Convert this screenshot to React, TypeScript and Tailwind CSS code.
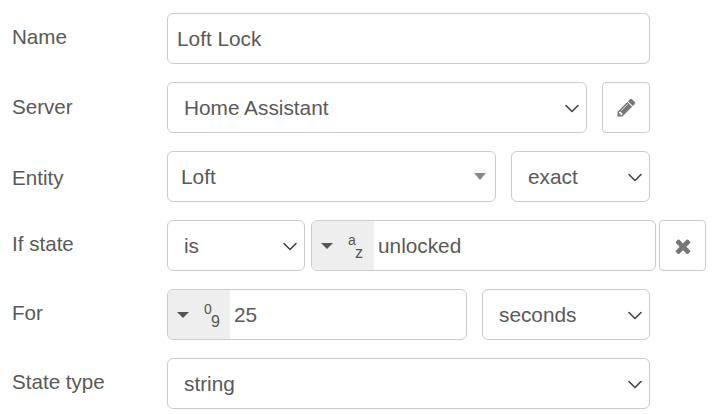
import React from "react";

const box = "h-[51px] flex items-center bg-white border border-[#ccc] rounded-[6px] text-[20.8px] text-[#595959]";

const Chevron = () => (
  <svg width="16" height="16" viewBox="0 0 16 16" className="shrink-0 mr-[1px]" fill="none">
    <path d="M2 5.5l6 6 6-6" stroke="#444" strokeWidth="1.6" strokeLinecap="round" strokeLinejoin="round" />
  </svg>
);

const Pencil = () => (
  <svg width="21" height="21" viewBox="0 0 1792 1792" fill="#777">
    <path d="M491 1536l91-91-235-235-91 91v107h128v128h107zm523-928q0-22-22-22-10 0-17 7l-542 542q-7 7-7 17 0 22 22 22 10 0 17-7l542-542q7-7 7-17zm-54-192l416 416-832 832h-416v-416zm683 96q0 53-37 90l-166 166-416-416 166-165q36-38 90-38 53 0 91 38l235 234q37 39 37 91z" />
  </svg>
);

const Times = () => (
  <svg width="22" height="22" viewBox="0 0 1792 1792" fill="#777">
    <path d="M1490 1322q0 40-28 68l-136 136q-28 28-68 28t-68-28l-294-294-294 294q-28 28-68 28t-68-28l-136-136q-28-28-28-68t28-68l294-294-294-294q-28-28-28-68t28-68l136-136q28-28 68-28t68 28l294 294 294-294q28-28 68-28t68 28l136 136q28 28 28 68t-28 68l-294 294 294 294q28 28 28 68z" />
  </svg>
);

const Caret = () => <span className="w-0 h-0 ml-[1px] border-x-[6px] border-x-transparent border-t-[6px] border-t-[#555]" />;

const Select = ({ value, className }: { value: string; className: string }) => (
  <div className={`${box} ${className} pl-[16px] pr-[5px] justify-between`}>
    <span>{value}</span>
    <Chevron />
  </div>
);

const TypeTag = ({ top, bottom }: { top: string; bottom: string }) => (
  <div className="w-[62px] h-full bg-[#eee] rounded-l-[5px] flex items-center pl-[8px] shrink-0">
    <Caret />
    <span className="relative ml-[15px] w-[18px] h-full text-[#555]">
      <span className="absolute left-0 top-[11px] text-[14px] leading-[16px]">{top}</span>
      <span className="absolute left-[7px] top-[23px] text-[16px] leading-[18px]">{bottom}</span>
    </span>
  </div>
);

const Row = ({ label, labelClass, children }: { label: string; labelClass: string; children: React.ReactNode }) => (
  <div className="flex items-center h-[51px]">
    <label className={`w-[155px] shrink-0 text-[20.6px] text-[#595959] ${labelClass}`}>{label}</label>
    {children}
  </div>
);

export default function App() {
  return (
    <div className="w-[720px] h-[414px] bg-white pl-[12px] pt-[13px] flex flex-col gap-[18px] overflow-hidden font-['Liberation_Sans',Arial,sans-serif]">
      <Row label="Name" labelClass="-mt-[3px]">
        <div className={`${box} w-[483px] pl-[9px]`}>Loft Lock</div>
      </Row>
      <Row label="Server" labelClass="-mt-[1px]">
        <Select value="Home Assistant" className="w-[420px]" />
        <div className={`${box} !rounded-[4px] w-[48px] ml-[15px] justify-center`}>
          <Pencil />
        </div>
      </Row>
      <Row label="Entity" labelClass="mt-[3px]">
        <div className={`${box} w-[329px] pl-[13px] pr-[9px] justify-between`}>
          <span>Loft</span>
          <span className="w-0 h-0 border-x-[6px] border-x-transparent border-t-[7px] border-t-[#888]" />
        </div>
        <Select value="exact" className="w-[139px] ml-[15px]" />
      </Row>
      <Row label="If state" labelClass="-mt-[3px]">
        <Select value="is" className="w-[138px]" />
        <div className={`${box} w-[345px] ml-[6px]`}>
          <TypeTag top="a" bottom="z" />
          <span className="ml-[4px]">unlocked</span>
        </div>
        <div className={`${box} !rounded-[4px] w-[47px] ml-[3px] justify-center`}>
          <Times />
        </div>
      </Row>
      <Row label="For" labelClass="-mt-[3px]">
        <div className={`${box} w-[300px]`}>
          <TypeTag top="0" bottom="9" />
          <span className="ml-[4px]">25</span>
        </div>
        <Select value="seconds" className="w-[168px] ml-[15px]" />
      </Row>
      <Row label="State type" labelClass="-mt-[3px]">
        <Select value="string" className="w-[483px]" />
      </Row>
    </div>
  );
}
